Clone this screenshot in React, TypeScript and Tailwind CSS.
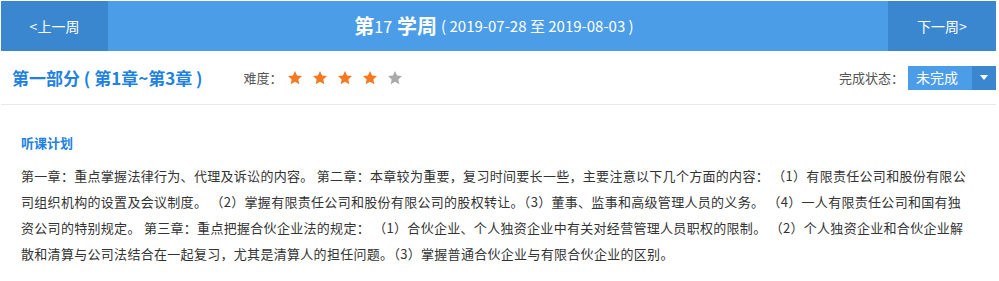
import React from 'react';

const Star: React.FC<{ on: boolean }> = ({ on }) => (
  <svg className={`h-[16px] w-[16px] ${on ? 'text-[#f47920]' : 'text-[#aaaaaa]'}`} viewBox="0 0 24 24" fill="currentColor">
    <polygon points="12,1.5 15.1,8.3 22.5,9.1 17,14.1 18.5,21.5 12,17.8 5.5,21.5 7,14.1 1.5,9.1 8.9,8.3" />
  </svg>
);

export default function App() {
  const rating = 4;

  return (
    <div className="w-[996px] bg-white pl-px pt-px font-['Noto_Sans_CJK_SC','Microsoft_YaHei',sans-serif]">
      {/* week switcher */}
      <div className="flex h-[50px] bg-[#4c9de8] text-white">
        <button className="flex w-[107px] items-center justify-center bg-[#3b87cf] text-[14px]">&lt;上一周</button>
        <div className="flex flex-1 items-center justify-center pr-[8px]">
          <span className="text-[20px] font-bold">第</span>
          <span className="text-[16px]">17</span>
          <span className="ml-[5px] text-[20px] font-bold">学周</span>
          <span className="ml-[4px] text-[15px]">( 2019-07-28 至 2019-08-03 )</span>
        </div>
        <button className="flex w-[108px] items-center justify-center bg-[#3b87cf] text-[14px]">下一周&gt;</button>
      </div>

      {/* part header */}
      <div className="flex h-[54px] items-center border-b border-[#e8e8e8] pl-[11px]">
        <h2 className="text-[17px] font-bold text-[#2181e0]">第一部分 ( 第1章~第3章 )</h2>
        <div className="ml-[41px] flex items-center text-[13px] text-[#555]">
          <span>难度：</span>
          <div className="ml-[4px] flex gap-[9px]">
            {[...Array(5)].map((_, i) => (
              <Star key={i} on={i < rating} />
            ))}
          </div>
        </div>
        <div className="ml-auto flex items-center text-[13px] text-[#555]">
          <span>完成状态：</span>
          <div className="ml-[4px] flex h-[24px] w-[88px] text-white">
            <span className="flex flex-1 items-center bg-[#4c9de8] pl-[8px] text-[14px]">未完成</span>
            <span className="flex w-[24px] items-center justify-center bg-[#3b87cf]">
              <svg width="8" height="5" viewBox="0 0 8 5" fill="currentColor">
                <polygon points="0,0 8,0 4,5" />
              </svg>
            </span>
          </div>
        </div>
      </div>

      {/* lesson plan */}
      <div className="pl-[20px] pr-[22px] pt-[25px]">
        <h3 className="text-[13px] font-bold leading-[26px] text-[#2181e0]">听课计划</h3>
        <p className="mt-[7px] text-[13px] leading-[26px] tracking-[0.3px] text-[#333]">
          第一章：重点掌握法律行为、代理及诉讼的内容。 第二章：本章较为重要，复习时间要长一些，主要注意以下几个方面的内容： （1）有限责任公司和股份有限公司组织机构的设置及会议制度。 （2）掌握有限责任公司和股份有限公司的股权转让。（3）董事、监事和高级管理人员的义务。 （4）一人有限责任公司和国有独资公司的特别规定。 第三章：重点把握合伙企业法的规定： （1）合伙企业、个人独资企业中有关对经营管理人员职权的限制。 （2）个人独资企业和合伙企业解散和清算与公司法结合在一起复习，尤其是清算人的担任问题。（3）掌握普通合伙企业与有限合伙企业的区别。
        </p>
      </div>
    </div>
  );
}
